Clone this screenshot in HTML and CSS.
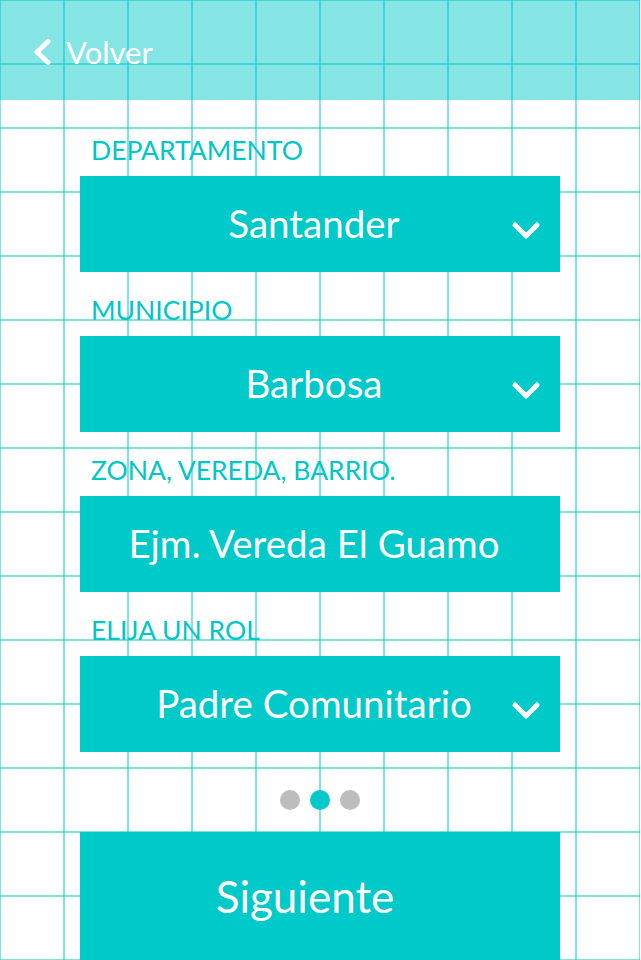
FILE: index.html
```html
<!DOCTYPE html>
<html lang="es">
<head>
<meta charset="utf-8">
<title>Registro</title>
<link rel="stylesheet" href="styles.css">
</head>
<body>
<div class="app">
  <header class="topbar">
    <a class="back" href="#">
      <svg class="back-icon" width="20" height="28" viewBox="0 0 20 28"><polyline points="16,3.5 5,14 16,24.5" fill="none" stroke="#fff" stroke-width="5" stroke-linecap="round" stroke-linejoin="round"/></svg>
      <span>Volver</span>
    </a>
  </header>
  <main class="form">
    <div class="field">
      <div class="label">DEPARTAMENTO</div>
      <div class="box">
        <span class="value">Santander</span>
        <svg class="chev" width="30" height="20" viewBox="0 0 30 20"><polyline points="4,4 15,15 26,4" fill="none" stroke="#fff" stroke-width="5" stroke-linecap="round" stroke-linejoin="round"/></svg>
      </div>
    </div>
    <div class="field">
      <div class="label">MUNICIPIO</div>
      <div class="box">
        <span class="value">Barbosa</span>
        <svg class="chev" width="30" height="20" viewBox="0 0 30 20"><polyline points="4,4 15,15 26,4" fill="none" stroke="#fff" stroke-width="5" stroke-linecap="round" stroke-linejoin="round"/></svg>
      </div>
    </div>
    <div class="field">
      <div class="label">ZONA, VEREDA, BARRIO.</div>
      <div class="box">
        <span class="value">Ejm. Vereda El Guamo</span>
      </div>
    </div>
    <div class="field">
      <div class="label">ELIJA UN ROL</div>
      <div class="box">
        <span class="value">Padre Comunitario</span>
        <svg class="chev" width="30" height="20" viewBox="0 0 30 20"><polyline points="4,4 15,15 26,4" fill="none" stroke="#fff" stroke-width="5" stroke-linecap="round" stroke-linejoin="round"/></svg>
      </div>
    </div>
    <div class="dots">
      <span class="dot"></span>
      <span class="dot active"></span>
      <span class="dot"></span>
    </div>
    <button class="next">Siguiente</button>
  </main>
</div>
</body>
</html>
```
FILE: styles.css
```css
* { box-sizing: border-box; }
html, body { margin: 0; padding: 0; background: #fff; }
body { width: 641px; height: 960px; overflow: hidden; font-family: Lato, "Noto Sans", sans-serif; }

.app {
  width: 640px;
  height: 960px;
  overflow: hidden;
  background-color: #fff;
  background-image:
    linear-gradient(to right, rgba(0, 201, 201, 0.5) 0, rgba(0, 201, 201, 0.5) 2px, transparent 2px),
    linear-gradient(to bottom, rgba(0, 201, 201, 0.5) 0, rgba(0, 201, 201, 0.5) 2px, transparent 2px);
  background-size: 64px 64px;
  background-position: -1px -1px;
}

.topbar {
  height: 100px;
  background: rgba(0, 201, 201, 0.48);
  display: flex;
  align-items: center;
  padding: 4px 0 0 32px;
}

.back {
  display: flex;
  align-items: center;
  gap: 14px;
  color: #fff;
  text-decoration: none;
  font-size: 31px;
  line-height: 1;
}
.back-icon { display: block; }

.form {
  padding: 12px 80px 0 80px;
}

.label {
  height: 64px;
  padding: 22px 0 0 11px;
  font-size: 26.5px;
  line-height: 32px;
  color: #00c6c6;
}

.box {
  position: relative;
  height: 96px;
  background: #00c9c9;
  display: flex;
  align-items: center;
  justify-content: center;
  padding: 0 12px 2px 0;
  color: #fff;
  font-size: 38.5px;
}

.chev {
  position: absolute;
  right: 19px;
  top: 45px;
}

.dots {
  display: flex;
  justify-content: center;
  gap: 10px;
  padding: 38px 0 22px;
}
.dot {
  width: 20px;
  height: 20px;
  border-radius: 50%;
  background: #bdbdbd;
}
.dot.active { background: #00c9c9; }

.next {
  display: flex;
  align-items: center;
  justify-content: center;
  width: 480px;
  height: 128px;
  border: 0;
  margin: 0;
  padding: 0 30px 0 0;
  background: #00c9c9;
  color: #fff;
  font-family: Lato, "Noto Sans", sans-serif;
  font-size: 44px;
}
```
